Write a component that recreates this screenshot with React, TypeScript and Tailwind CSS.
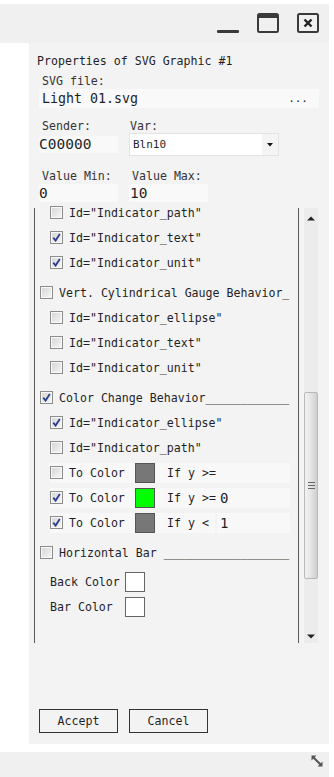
import React from 'react';

type Item =
  | { kind: 'check'; label: string; checked?: boolean; header?: boolean; gap?: boolean }
  | { kind: 'color'; checked?: boolean; swatch: string; op: string; value?: string; split?: boolean };

const items: Item[] = [
  { kind: 'check', label: 'Id="Indicator_path"' },
  { kind: 'check', label: 'Id="Indicator_text"', checked: true },
  { kind: 'check', label: 'Id="Indicator_unit"', checked: true },
  { kind: 'check', label: 'Vert. Cylindrical Gauge Behavior_', header: true, gap: true },
  { kind: 'check', label: 'Id="Indicator_ellipse"' },
  { kind: 'check', label: 'Id="Indicator_text"' },
  { kind: 'check', label: 'Id="Indicator_unit"' },
  { kind: 'check', label: 'Color Change Behavior____________', header: true, checked: true, gap: true },
  { kind: 'check', label: 'Id="Indicator_ellipse"', checked: true },
  { kind: 'check', label: 'Id="Indicator_path"' },
  { kind: 'color', swatch: 'bg-[#777777]', op: 'If y >=' },
  { kind: 'color', swatch: 'bg-[#00ff00]', op: 'If y >=', value: '0', checked: true },
  { kind: 'color', swatch: 'bg-[#777777]', op: 'If y <', value: '1', checked: true, split: true },
  { kind: 'check', label: 'Horizontal Bar __________________', header: true, gap: true },
];

function Box({ checked }: { checked?: boolean }) {
  return (
    <span className="flex h-[13px] w-[13px] shrink-0 items-center justify-center border border-[#8c8c8c] bg-[#f7f7f7]">
      <span className="flex h-[11px] w-[11px] items-center justify-center border border-[#f9f9f9] bg-gradient-to-br from-[#d8d8d8] to-[#f4f4f4]">
        {checked && (
          <svg width="9" height="9" viewBox="0 0 9 9">
            <path d="M1.3 4.6 L3.6 7.6 L7.8 0.9" fill="none" stroke="#2b3f8c" strokeWidth="1.8" />
          </svg>
        )}
      </span>
    </span>
  );
}

function Row({ item }: { item: Item }) {
  if (item.kind === 'color') {
    return (
      <div className="flex h-[25px] items-center pl-[15px]">
        <div className={`flex h-[20px] shrink-0 items-center overflow-hidden ${item.split ? 'w-[165px]' : 'w-[240px]'} bg-[#f8f8f8]`}>
          <Box checked={item.checked} />
          <span className="ml-[6px] w-[66px] shrink-0">To Color</span>
          <span className={`h-[20px] w-[20px] shrink-0 border border-[#555] ${item.swatch}`} />
          <span className="ml-[12px] w-[53px] shrink-0 whitespace-nowrap">{item.op}</span>
          {!item.split && <span className="text-[14px] leading-none">{item.value}</span>}
        </div>
        {item.split && (
          <div className="ml-[2px] flex h-[20px] w-[73px] shrink-0 items-center bg-[#f8f8f8] pl-[3px] text-[14px] leading-none">
            {item.value}
          </div>
        )}
      </div>
    );
  }
  return (
    <div className={`flex h-[25px] items-center ${item.header ? 'pl-[5px]' : 'pl-[15px]'} ${item.gap ? 'mt-[5px]' : ''}`}>
      <Box checked={item.checked} />
      <span className="ml-[6px] whitespace-nowrap">{item.label}</span>
    </div>
  );
}

function Swatch() {
  return <span className="h-[20px] w-[20px] border border-[#666] bg-white" />;
}

export default function App() {
  return (
    <div className="flex h-[777px] w-full flex-col bg-white font-['DejaVu_Sans_Mono',monospace] text-[11.6px] leading-[14px] text-[#1f1f28]">
      <div className="h-[4px]" />
      <div className="mr-[5px] flex h-[39px] items-start justify-end bg-[#f0f0f0] pr-[10px]">
        <div className="mt-[26px] h-[3px] w-[22px] rounded-[1px] bg-[#3a3a3a]" />
        <svg className="ml-[18px] mt-[9px]" width="22" height="20" viewBox="0 0 22 20">
          <rect x="1" y="1" width="20" height="18" rx="1.5" fill="none" stroke="#3a3a3a" strokeWidth="2" />
          <rect x="1" y="1" width="20" height="4" fill="#3a3a3a" />
        </svg>
        <svg className="ml-[18px] mt-[9px]" width="22" height="20" viewBox="0 0 22 20">
          <rect x="1" y="1" width="20" height="18" rx="1.5" fill="none" stroke="#3a3a3a" strokeWidth="2" />
          <path d="M7.5 6.5 L14.5 13.5 M14.5 6.5 L7.5 13.5" stroke="#222" strokeWidth="2.4" />
        </svg>
      </div>

      <div className="flex h-[701px]">
        <div className="w-[29px]" />
        <div className="mr-[5px] flex flex-1 flex-col bg-[#f3f3f3] pl-[10px]">
          <div className="-ml-[2px] mt-[11px]">Properties of SVG Graphic #1</div>
          <div className="mt-[6px] pl-[3px] text-[#333]">SVG file:</div>
          <div className="mt-[1px] flex h-[19px] w-[280px] items-center justify-between bg-[#f9f9f9] pl-[3px] pr-[11px] text-[13.3px]">
            <span>Light 01.svg</span>
            <span className="text-[11px]">...</span>
          </div>

          <div className="mt-[11px] grid grid-cols-[90px_150px] text-[#333]">
            <span className="pl-[3px]">Sender:</span>
            <span className="pl-[1px]">Var:</span>
          </div>
          <div className="grid h-[23px] grid-cols-[90px_150px] items-center">
            <div className="flex h-[17px] w-[79px] items-center bg-[#f9f9f9] text-[14.5px] leading-none">C00000</div>
            <div className="flex h-[23px] w-[150px] items-center border border-[#e3e3e3] bg-white">
              <span className="flex-1 pl-[3px] text-[11px]">Bln10</span>
              <span className="flex h-full w-[16px] items-center justify-center bg-[#f4f4f4]">
                <svg width="6" height="4" viewBox="0 0 6 4">
                  <path d="M0 0 H6 L3 3.5 Z" fill="#111" />
                </svg>
              </span>
            </div>
          </div>

          <div className="mt-[13px] grid grid-cols-[90px_150px] text-[#333]">
            <span className="pl-[3px]">Value Min:</span>
            <span className="pl-[3px]">Value Max:</span>
          </div>
          <div className="mt-[1px] grid h-[18px] grid-cols-[90px_150px]">
            <div className="flex h-[18px] w-[79px] items-center bg-[#f9f9f9] text-[14.5px] leading-none">0</div>
            <div className="flex h-[18px] w-[79px] items-center bg-[#f9f9f9] pl-[1px] text-[14.5px] leading-none">10</div>
          </div>

          <div className="-ml-[5px] mt-[6px] flex h-[435px] w-[285px]">
            <div className="h-full w-[265px] border-x border-[#5a5a5a]">
              <div className="-mt-[8px]">
                {items.map((it, i) => (
                  <Row key={i} item={it} />
                ))}
                <div className="mt-[4px] flex h-[25px] items-center pl-[15px]">
                  <span className="w-[75px]">Back Color</span>
                  <Swatch />
                </div>
                <div className="flex h-[25px] items-center pl-[15px]">
                  <span className="w-[75px]">Bar Color</span>
                  <Swatch />
                </div>
              </div>
            </div>
            <div className="relative ml-[4px] h-full w-[15px] border-l border-[#f7f7f7] bg-[#ececec]">
              <svg className="absolute left-[3px] top-[8px]" width="8" height="5" viewBox="0 0 8 5">
                <path d="M0 4.5 H8 L4 0.5 Z" fill="#222" />
              </svg>
              <div className="absolute left-0 top-[184px] flex h-[187px] w-[14px] items-center justify-center rounded-[2px] border border-[#b8b8b8] bg-gradient-to-r from-[#f2f2f2] via-[#e4e4e4] to-[#cfcfcf]">
                <div className="flex flex-col gap-[2px]">
                  <span className="h-px w-[7px] bg-[#666]" />
                  <span className="h-px w-[7px] bg-[#666]" />
                  <span className="h-px w-[7px] bg-[#666]" />
                </div>
              </div>
              <svg className="absolute bottom-[4px] left-[3px]" width="8" height="5" viewBox="0 0 8 5">
                <path d="M0 0.5 H8 L4 4.5 Z" fill="#222" />
              </svg>
            </div>
          </div>

          <div className="mt-[66px] flex gap-[11px]">
            <button className="h-[24px] w-[79px] border border-[#333] bg-[#f3f3f3]">Accept</button>
            <button className="h-[24px] w-[79px] border border-[#333] bg-[#f3f3f3]">Cancel</button>
          </div>
        </div>
      </div>

      <div className="h-[8px]" />
      <div className="mr-[5px] flex h-[25px] items-start justify-end bg-[#f0f0f0] pr-[6px] pt-[3px]">
        <svg width="12" height="12" viewBox="0 0 12 12">
          <path d="M2.5 2.5 L9.5 9.5" stroke="#555" strokeWidth="2" />
          <path d="M0.5 0.5 H5.5 L0.5 5.5 Z" fill="#555" />
          <path d="M11.5 11.5 H6.5 L11.5 6.5 Z" fill="#555" />
        </svg>
      </div>
    </div>
  );
}
